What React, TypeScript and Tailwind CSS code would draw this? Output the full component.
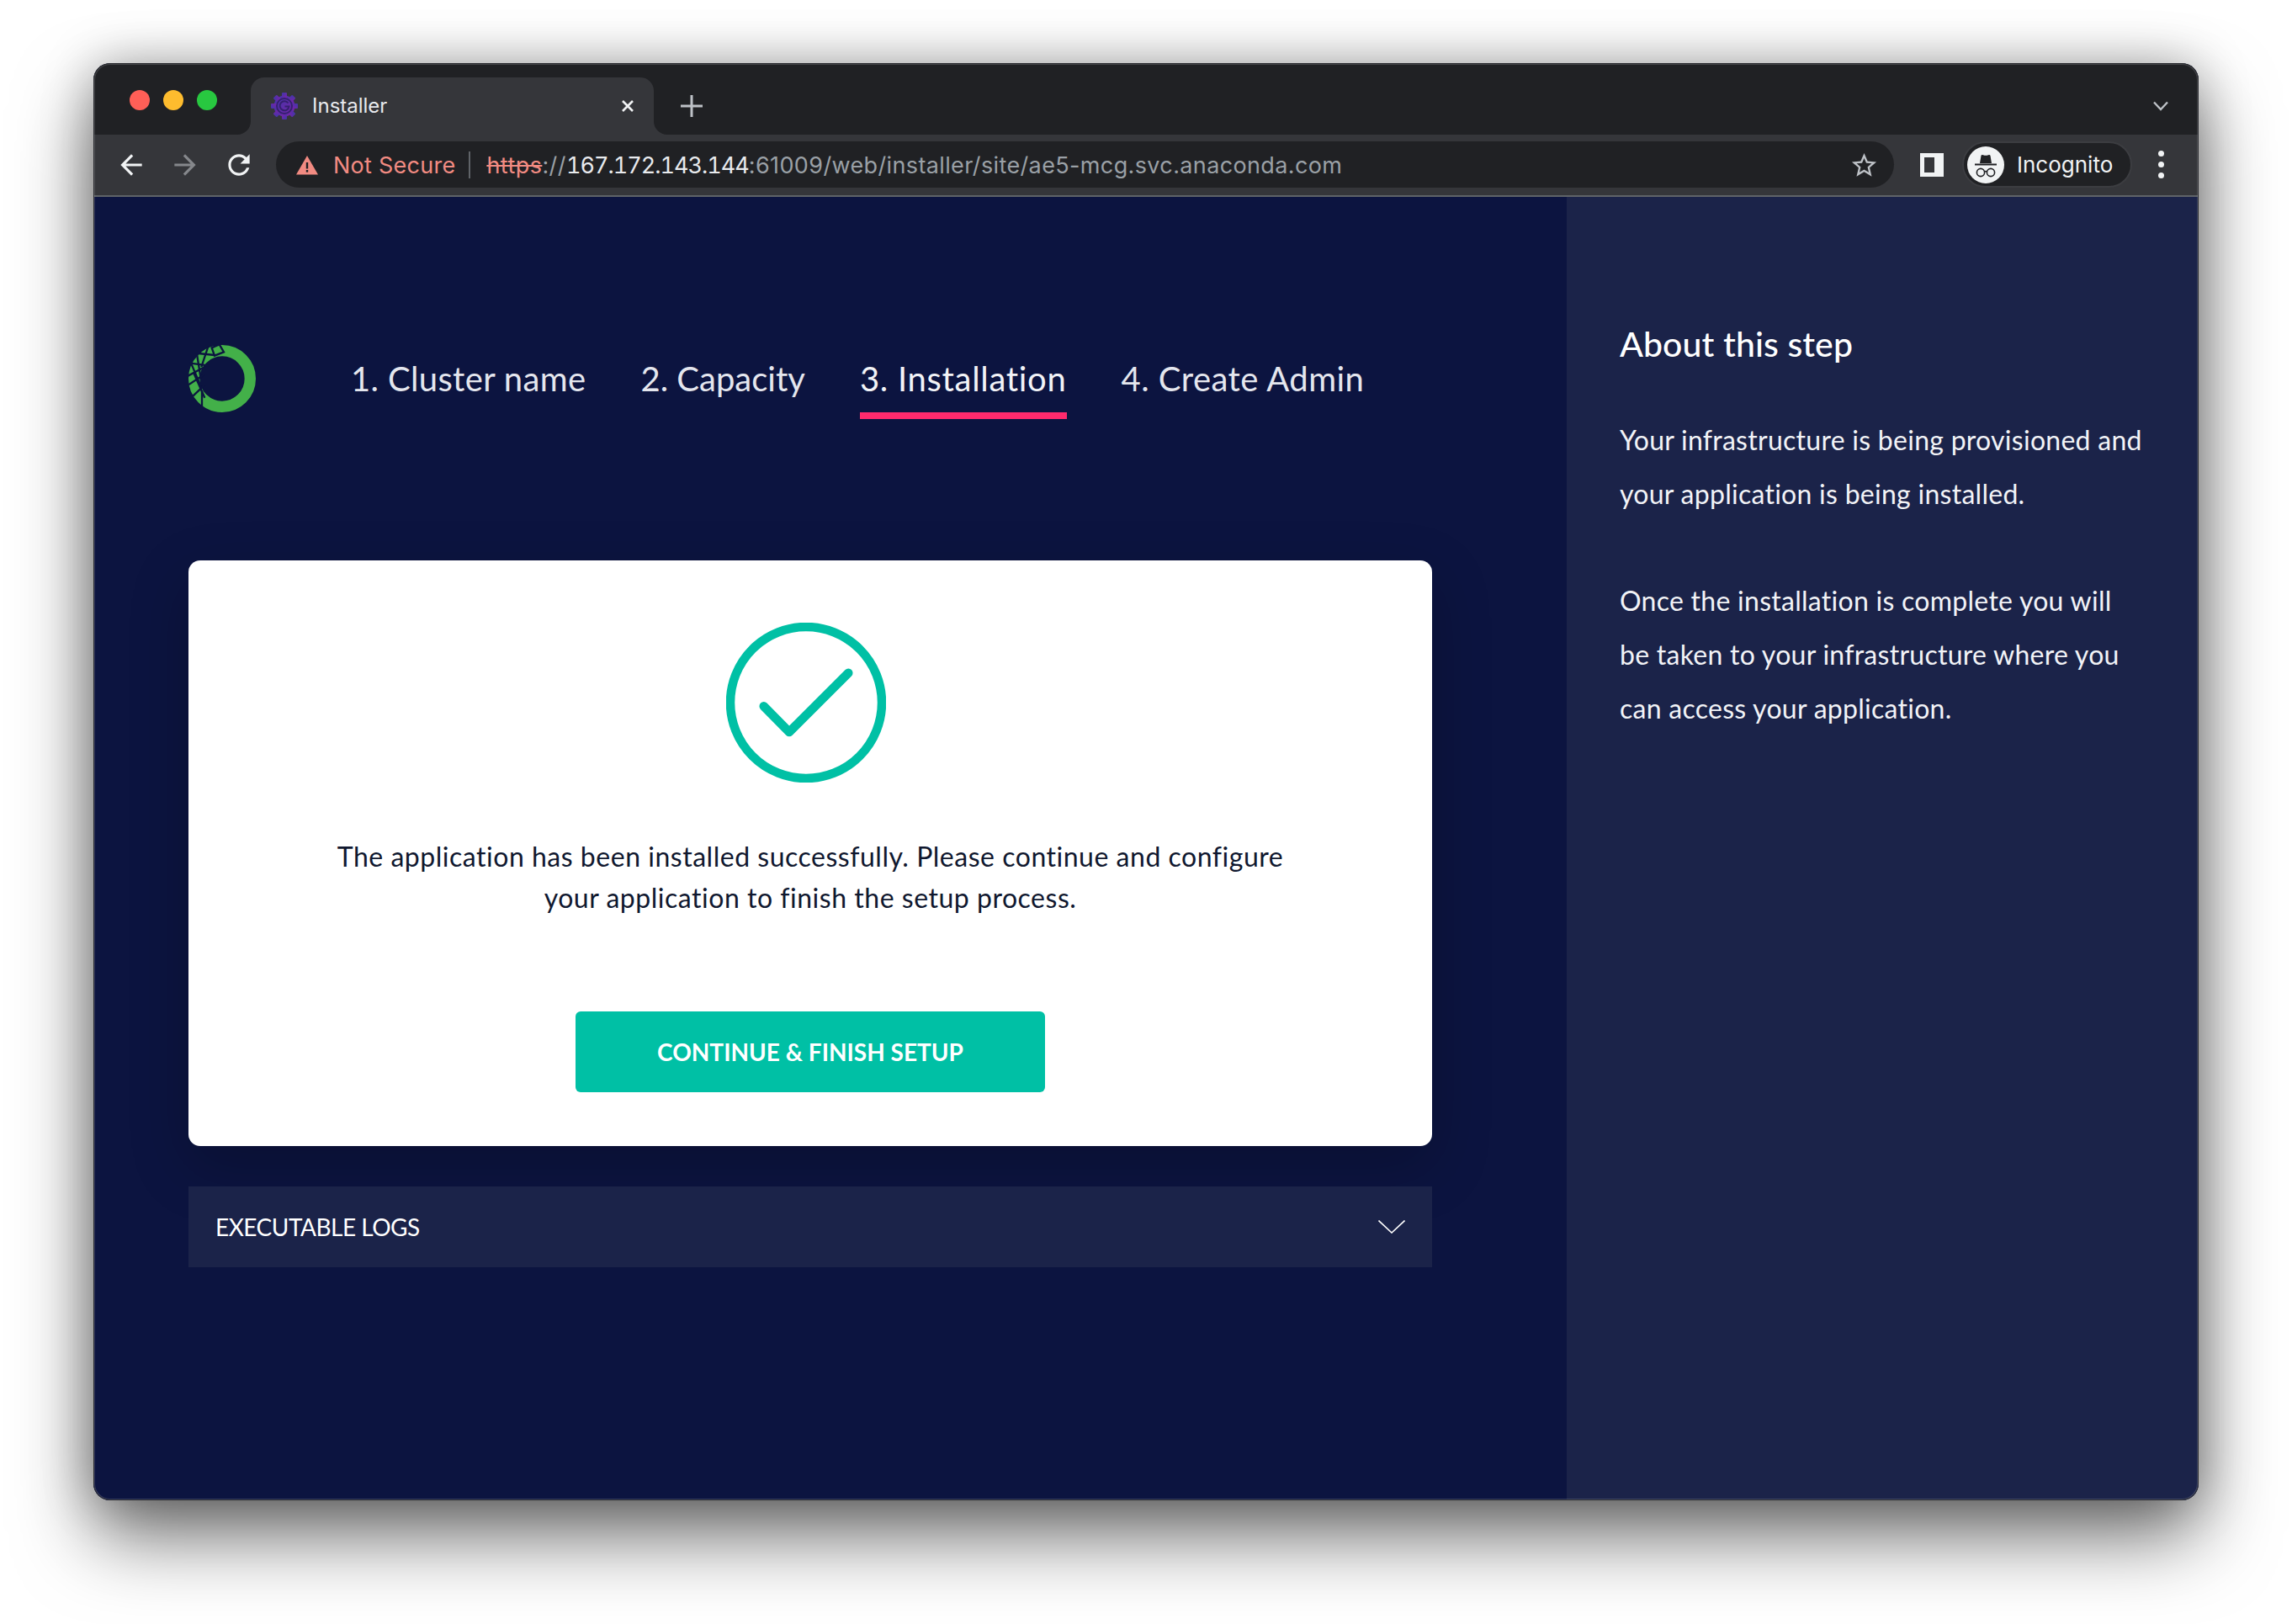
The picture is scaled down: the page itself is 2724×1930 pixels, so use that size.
import React from "react";

const sans = "font-['Lato','Noto_Sans',sans-serif]";

function Gear() {
  return (
    <svg width="34" height="34" viewBox="0 0 34 34" className="shrink-0">
      <defs>
        <linearGradient id="g" x1="0" y1="0" x2="1" y2="1">
          <stop offset="0" stopColor="#3f37a8" />
          <stop offset="1" stopColor="#7a22a8" />
        </linearGradient>
      </defs>
      <g fill="url(#g)">
        <circle cx="17" cy="17" r="12.5" />
        {[0, 45, 90, 135, 180, 225, 270, 315].map((a) => (
          <rect key={a} x="14" y="1" width="6" height="7" rx="1" transform={`rotate(${a} 17 17)`} />
        ))}
      </g>
      <circle cx="17" cy="17" r="9" fill="none" stroke="#35206f" strokeWidth="2" />
      <path d="M21.5 13.5a5.5 5.5 0 1 0 1 4h-5" fill="none" stroke="#35206f" strokeWidth="2" />
    </svg>
  );
}

function Logo() {
  return (
    <svg width="80" height="80" viewBox="42 30 240 240" className="shrink-0">
      <circle cx="162" cy="150" r="100" fill="none" stroke="#43b049" strokeWidth="40" />
      <g stroke="#0c1440" strokeWidth="7" fill="none">
        <path d="M125 40 L152 28 L168 55 L135 68 Z" />
        <path d="M78 60 L135 66" />
        <path d="M112 36 L88 108" />
        <path d="M48 95 L118 104" />
        <path d="M72 62 L86 150" />
        <path d="M40 140 L100 108" />
        <path d="M50 92 L88 182" />
        <path d="M42 172 L98 135" />
        <path d="M60 128 L100 218" />
        <path d="M58 212 L100 172" />
        <path d="M90 192 L90 250" />
      </g>
    </svg>
  );
}

function Incognito() {
  return (
    <svg width="44" height="44" viewBox="0 0 44 44" className="shrink-0">
      <circle cx="22" cy="22" r="22" fill="#f1f3f4" />
      <path d="M15 20 L16.5 11 Q17 9.5 19 10.3 Q22 11.3 25 10.3 Q27 9.5 27.5 11 L29 20 Z" fill="#202124" />
      <rect x="9" y="20.5" width="26" height="2" fill="#202124" />
      <circle cx="16" cy="31" r="4.6" fill="none" stroke="#202124" strokeWidth="1.6" />
      <circle cx="28" cy="31" r="4.6" fill="none" stroke="#202124" strokeWidth="1.6" />
      <path d="M20.5 30 Q22 29 23.5 30" fill="none" stroke="#202124" strokeWidth="1.6" />
    </svg>
  );
}

export default function App() {
  return (
    <div className="h-[1930px] w-[2724px] overflow-hidden bg-white pl-[111px] pt-[75px]">
      <div className="relative flex h-[1708px] w-[2502px] flex-col overflow-hidden rounded-[20px] bg-[#0c1440] shadow-[0_44px_90px_rgba(0,0,0,0.55),0_0_60px_rgba(0,0,0,0.28)]">
        {/* Tab strip */}
        <div className="flex h-[85px] shrink-0 items-end bg-[#202124]">
          <div className="flex h-[85px] w-[187px] items-start gap-4 pl-[43px] pt-[32px]">
            <span className="h-6 w-6 rounded-full bg-[#ff5f57]" />
            <span className="h-6 w-6 rounded-full bg-[#febc2e]" />
            <span className="h-6 w-6 rounded-full bg-[#28c840]" />
          </div>
          <div className="relative flex h-[68px] w-[479px] items-center rounded-t-[16px] bg-[#35363a] pl-[23px] pr-[23px]">
            <svg width="16" height="16" viewBox="0 0 16 16" className="absolute bottom-0 left-[-16px]">
              <path d="M16 0 V16 H0 A16 16 0 0 0 16 0 Z" fill="#35363a" />
            </svg>
            <svg width="16" height="16" viewBox="0 0 16 16" className="absolute bottom-0 right-[-16px]">
              <path d="M0 0 V16 H16 A16 16 0 0 1 0 0 Z" fill="#35363a" />
            </svg>
            <Gear />
            <span className="ml-[16px] font-['Inter',sans-serif] text-[24px] leading-none text-[#e8eaed]">Installer</span>
            <svg width="18" height="18" viewBox="0 0 18 18" className="ml-auto mr-[-1px]">
              <path d="M3 3 L15 15 M15 3 L3 15" stroke="#f1f3f4" strokeWidth="2.6" />
            </svg>
          </div>
          <div className="flex h-[68px] flex-1 items-center pl-[32px] pr-[35px]">
            <svg width="26" height="26" viewBox="0 0 26 26">
              <path d="M13 0 V26 M0 13 H26" stroke="#bdc1c6" strokeWidth="3" />
            </svg>
            <svg width="20" height="12" viewBox="0 0 20 12" className="ml-auto">
              <path d="M2 1.5 L10 10 L18 1.5" fill="none" stroke="#bdc1c6" strokeWidth="2.4" />
            </svg>
          </div>
        </div>

        {/* Toolbar */}
        <div className="flex h-[74px] shrink-0 items-start border-b-2 border-[#5f6368] bg-[#35363a] pl-[26px] pt-[8px]">
          <div className="flex h-[55px] items-center gap-[26px]">
            <svg width="38" height="38" viewBox="0 0 24 24" fill="#f1f3f4">
              <path d="M20 11H7.83l5.59-5.59L12 4l-8 8 8 8 1.41-1.41L7.83 13H20v-2z" />
            </svg>
            <svg width="38" height="38" viewBox="0 0 24 24" fill="#85878b">
              <path d="M4 11h12.17l-5.59-5.59L12 4l8 8-8 8-1.41-1.41L16.17 13H4v-2z" />
            </svg>
            <svg width="38" height="38" viewBox="0 0 24 24" fill="#f1f3f4">
              <path d="M17.65 6.35C16.2 4.9 14.21 4 12 4c-4.42 0-7.99 3.58-7.99 8s3.57 8 7.99 8c3.73 0 6.84-2.55 7.73-6h-2.08c-.82 2.33-3.04 4-5.65 4-3.31 0-6-2.69-6-6s2.69-6 6-6c1.66 0 3.14.69 4.22 1.78L13 11h7V4l-2.35 2.35z" />
            </svg>
          </div>
          <div className="ml-[25px] flex h-[55px] w-[1923px] items-center rounded-full bg-[#202124] pl-[24px] pr-[18px] pt-[1px] font-['Inter',sans-serif] text-[27px] leading-none">
            <svg width="26" height="24" viewBox="0 0 26 24" className="shrink-0">
              <path d="M13 1 L26 23.5 H0 Z" fill="#f28b82" />
              <rect x="11.8" y="9" width="2.4" height="7.5" fill="#202124" />
              <rect x="11.8" y="18" width="2.4" height="2.6" fill="#202124" />
            </svg>
            <span className="ml-[18px] tracking-[0.25px] text-[#f28b82]">Not Secure</span>
            <span className="ml-[16px] h-[32px] w-[2px] bg-[#5f6368]" />
            <span className="ml-[19px] whitespace-nowrap">
              <span className="tracking-[0.45px] text-[#f28b82] line-through">https</span>
              <span className="tracking-[0.45px] text-[#9aa0a6]">://</span>
              <span className="tracking-[-1px] text-[#e8eaed] tabular-nums">167.172.143.144</span>
              <span className="tracking-[0.37px] text-[#9aa0a6]">:61009/web/installer/site/ae5-mcg.svc.anaconda.com</span>
            </span>
            <svg width="35" height="35" viewBox="0 0 24 24" fill="#bdc1c6" className="ml-auto">
              <path d="M22 9.24l-7.19-.62L12 2 9.19 8.63 2 9.24l5.46 4.73L5.82 21 12 17.27 18.18 21l-1.63-7.03L22 9.24zM12 15.4l-3.76 2.27 1-4.28-3.32-2.88 4.38-.38L12 6.1l1.71 4.04 4.38.38-3.32 2.88 1 4.28L12 15.4z" />
            </svg>
          </div>
          <div className="ml-[31px] flex h-[55px] items-center">
            <span className="flex h-[28px] w-[28px] justify-end border-[5px] border-[#f1f3f4]">
              <span className="h-full w-[6px] bg-[#f1f3f4]" />
            </span>
          </div>
          <div className="ml-[22px] flex h-[55px] w-[202px] items-center rounded-full border-2 border-[#3c3d41] bg-[#202124] pl-[4px]">
            <Incognito />
            <span className="ml-[15px] font-['Inter',sans-serif] text-[26px] leading-none text-[#f1f3f4]">Incognito</span>
          </div>
          <div className="ml-[31px] flex h-[55px] flex-col items-center justify-center gap-[6px]">
            <span className="h-[7px] w-[7px] rounded-full bg-[#f1f3f4]" />
            <span className="h-[7px] w-[7px] rounded-full bg-[#f1f3f4]" />
            <span className="h-[7px] w-[7px] rounded-full bg-[#f1f3f4]" />
          </div>
        </div>

        {/* Content */}
        <div className={`flex min-h-0 flex-1 ${sans}`}>
          <div className="w-[1751px] shrink-0 bg-[#0c1440] pl-[113px] pt-[176px]">
            <div className="flex items-start">
              <Logo />
              <div className="ml-[113px] mt-4 flex gap-[65px] text-[40px] leading-[48px] text-[#e4e6ee]">
                <div className="border-b-8 border-transparent pb-4 tracking-[0.35px]">1. Cluster name</div>
                <div className="border-b-8 border-transparent pb-4">2. Capacity</div>
                <div className="border-b-8 border-[#ff2a6d] pb-4 tracking-[0.7px] text-[#f2f3f7]">3. Installation</div>
                <div className="border-b-8 border-transparent pb-4 tracking-[0.45px]">4. Create Admin</div>
              </div>
            </div>

            <div className="mt-[168px] flex h-[696px] w-[1478px] flex-col items-center rounded-[14px] bg-white pt-[74px] shadow-[0_24px_70px_rgba(0,0,0,0.22)]">
              <svg width="190" height="190" viewBox="0 0 190 190" className="ml-[-10px] shrink-0">
                <circle cx="95" cy="95" r="90" fill="none" stroke="#00c0a5" strokeWidth="10.5" />
                <path d="M44.7 99.3 L75 130 L145.3 59.7" fill="none" stroke="#00c0a5" strokeWidth="10.5" strokeLinecap="round" strokeLinejoin="round" />
              </svg>
              <p className="mt-[64px] text-center text-[32px] leading-[48.5px] tracking-[0.52px] text-[#10182f]">
                The application has been installed successfully. Please continue and configure
                <br />
                your application to finish the setup process.
              </p>
              <button className="mt-[111px] flex h-[96px] w-[558px] items-center justify-center rounded-[6px] bg-[#00c0a5] text-[28px] font-bold text-white">
                CONTINUE &amp; FINISH SETUP
              </button>
            </div>

            <div className="mt-[48px] flex h-[96px] w-[1478px] items-center justify-between bg-[#1b2349] pl-[32px] pr-[32px] text-[28px] tracking-[-0.5px] text-white">
              <span>EXECUTABLE LOGS</span>
              <svg width="32" height="16" viewBox="0 0 32 16">
                <path d="M0.5 0.5 L16 15 L31.5 0.5" fill="none" stroke="#fff" strokeWidth="1.6" />
              </svg>
            </div>
          </div>

          <div className="flex-1 bg-[#1b2349] pl-[63px] pt-[147px] text-[32px] leading-[64px] tracking-[0.27px] text-[#f2f3f7]">
            <h2 className="text-[41px] font-medium leading-[56px] tracking-[0.1px] text-white">About this step</h2>
            <p className="mt-[54px]">
              Your infrastructure is being provisioned and
              <br />
              your application is being installed.
            </p>
            <p className="mt-[63px]">
              Once the installation is complete you will
              <br />
              be taken to your infrastructure where you
              <br />
              can access your application.
            </p>
          </div>
        </div>

        <div className="pointer-events-none absolute inset-0 rounded-[20px] shadow-[inset_0_0_0_1px_#2a2b30,inset_0_0_0_2px_rgba(255,255,255,0.16)]" />
      </div>
    </div>
  );
}
